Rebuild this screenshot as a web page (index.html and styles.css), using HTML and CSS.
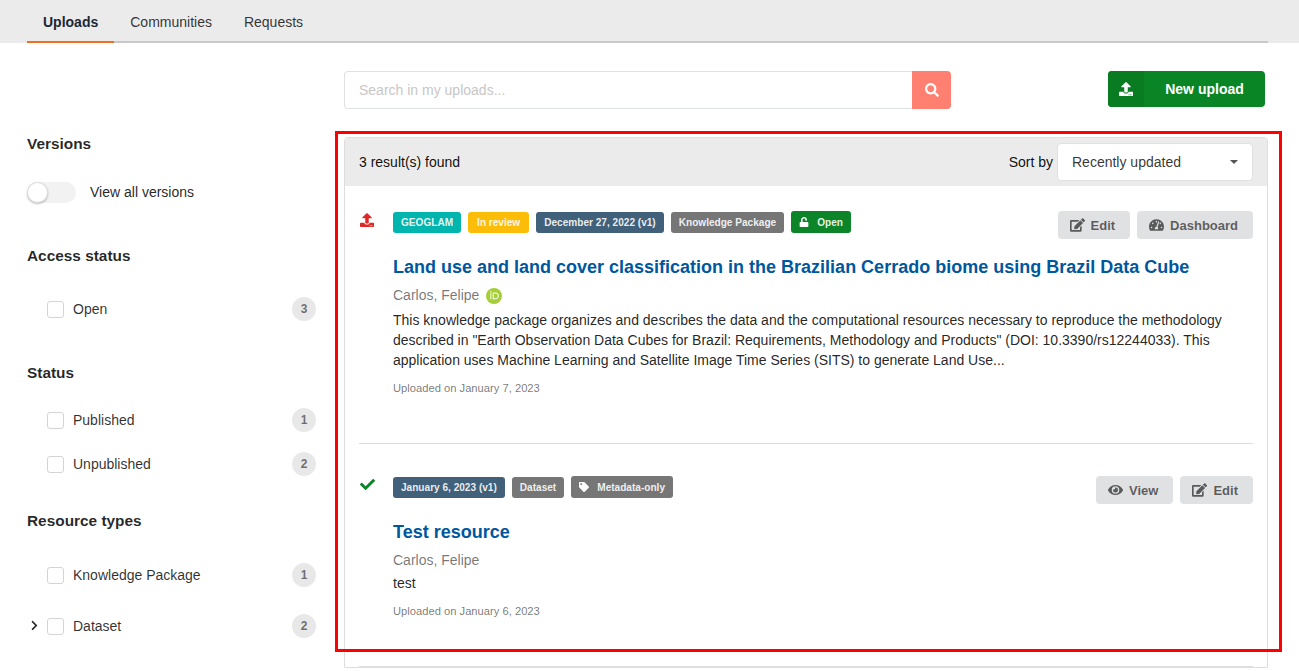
FILE: index.html
```html
<!DOCTYPE html>
<html lang="en">
<head>
    <meta charset="UTF-8">
    <meta name="viewport" content="width=device-width, initial-scale=1.0">
    <title>Uploads</title>
    <link rel="stylesheet" href="styles.css">
</head>
<body>
    <svg class="sprite" aria-hidden="true">
        <symbol id="i-upload" viewBox="0 0 512 512"><path d="M296 384h-80c-13.3 0-24-10.7-24-24V192h-87.7c-17.8 0-26.7-21.5-14.1-34.1L242.3 5.7c7.5-7.5 19.8-7.5 27.3 0l152.2 152.2c12.6 12.6 3.7 34.1-14.1 34.1H320v168c0 13.3-10.7 24-24 24zm216-8v112c0 13.3-10.7 24-24 24H24c-13.3 0-24-10.7-24-24V376c0-13.3 10.7-24 24-24h136v8c0 30.9 25.1 56 56 56h80c30.9 0 56-25.1 56-56v-8h136c13.3 0 24 10.7 24 24zm-124 88c0-11-9-20-20-20s-20 9-20 20 9 20 20 20 20-9 20-20zm64 0c0-11-9-20-20-20s-20 9-20 20 9 20 20 20 20-9 20-20z"/></symbol>
        <symbol id="i-search" viewBox="0 0 512 512"><path d="M505 442.7L405.3 343c-4.5-4.5-10.6-7-17-7H372c27.6-35.3 44-79.7 44-128C416 93.1 322.9 0 208 0S0 93.1 0 208s93.1 208 208 208c48.3 0 92.7-16.4 128-44v16.3c0 6.4 2.5 12.5 7 17l99.7 99.7c9.4 9.4 24.6 9.4 33.9 0l28.3-28.3c9.4-9.4 9.4-24.6.1-34zM208 336c-70.7 0-128-57.2-128-128 0-70.7 57.2-128 128-128 70.7 0 128 57.2 128 128 0 70.7-57.2 128-128 128z"/></symbol>
        <symbol id="i-check" viewBox="0 0 512 512"><path d="M173.898 439.404l-166.4-166.4c-9.997-9.997-9.997-26.206 0-36.204l36.203-36.204c9.997-9.998 26.207-9.998 36.204 0L192 312.69 432.095 72.596c9.997-9.997 26.207-9.997 36.204 0l36.203 36.204c9.997 9.997 9.997 26.206 0 36.204l-294.4 294.401c-9.998 9.997-26.207 9.997-36.204-.001z"/></symbol>
        <symbol id="i-edit" viewBox="0 0 576 512"><path d="M402.6 83.2l90.2 90.2c3.8 3.8 3.8 10 0 13.8L274.4 405.6l-92.8 10.3c-12.4 1.4-22.9-9.1-21.5-21.5l10.3-92.8L388.8 83.2c3.8-3.8 10-3.8 13.8 0zm162-22.9l-48.8-48.8c-15.2-15.2-39.9-15.2-55.2 0l-35.4 35.4c-3.8 3.8-3.8 10 0 13.8l90.2 90.2c3.8 3.8 10 3.8 13.8 0l35.4-35.4c15.2-15.3 15.2-40 0-55.2zM384 346.2V448H64V128h229.8c3.2 0 6.2-1.3 8.5-3.5l40-40c7.6-7.6 2.2-20.5-8.5-20.5H48C21.5 64 0 85.5 0 112v352c0 26.5 21.5 48 48 48h352c26.5 0 48-21.5 48-48V306.2c0-10.7-12.9-16-20.5-8.5l-40 40c-2.2 2.3-3.5 5.3-3.5 8.5z"/></symbol>
        <symbol id="i-eye" viewBox="0 0 576 512"><path d="M572.52 241.4C518.29 135.59 410.93 64 288 64S57.68 135.64 3.48 241.41a32.35 32.35 0 0 0 0 29.19C57.71 376.41 165.07 448 288 448s230.32-71.64 284.52-177.41a32.35 32.35 0 0 0 0-29.19zM288 400a144 144 0 1 1 144-144 143.93 143.93 0 0 1-144 144zm0-240a95.31 95.31 0 0 0-25.31 3.79 47.85 47.85 0 0 1-66.9 66.9A95.78 95.78 0 1 0 288 160z"/></symbol>
        <symbol id="i-tag" viewBox="0 0 512 512"><path d="M0 252.118V48C0 21.49 21.49 0 48 0h204.118a48 48 0 0 1 33.941 14.059l211.882 211.882c18.745 18.745 18.745 49.137 0 67.882L293.823 497.941c-18.745 18.745-49.137 18.745-67.882 0L14.059 286.059A48 48 0 0 1 0 252.118zM112 64c-26.51 0-48 21.49-48 48s21.49 48 48 48 48-21.49 48-48-21.49-48-48-48z"/></symbol>
        <symbol id="i-unlock" viewBox="0 0 448 512"><path d="M400 256H152V152.9c0-39.6 31.7-72.5 71.3-72.9 40-.4 72.7 32.1 72.7 72v16c0 13.3 10.7 24 24 24h32c13.3 0 24-10.7 24-24v-16C376 68 307.5-.3 223.5 0 139.5.3 72 69.5 72 153.5V256H48c-26.5 0-48 21.5-48 48v160c0 26.5 21.5 48 48 48h352c26.5 0 48-21.5 48-48V304c0-26.5-21.5-48-48-48z"/></symbol>
        <symbol id="i-dashboard" viewBox="0 0 576 512"><path d="M288 32C128.94 32 0 160.94 0 320c0 52.8 14.25 102.26 39.06 144.8 5.61 9.62 16.3 15.2 27.44 15.2h443c11.14 0 21.83-5.58 27.44-15.2C561.75 422.26 576 372.8 576 320c0-159.06-128.94-288-288-288zm0 64c14.71 0 26.58 10.13 30.32 23.65-1.11 2.26-2.64 4.23-3.45 6.67l-9.22 27.67c-5.13 3.49-10.97 6.01-17.64 6.01-17.67 0-32-14.33-32-32S270.33 96 288 96zM96 384c-17.67 0-32-14.33-32-32s14.33-32 32-32 32 14.33 32 32-14.33 32-32 32zm48-160c-17.67 0-32-14.33-32-32s14.33-32 32-32 32 14.33 32 32-14.33 32-32 32zm246.77-72.41l-61.33 184C343.13 347.33 352 364.54 352 384c0 11.72-3.38 22.55-8.88 32H232.88c-5.5-9.45-8.88-20.28-8.88-32 0-33.94 26.5-61.43 59.9-63.59l61.34-184.01c4.17-12.56 17.73-19.45 30.36-15.17 12.57 4.19 19.35 17.79 15.17 30.36zm14.66 57.2l15.52-46.55c3.47-1.29 7.13-2.23 11.05-2.23 17.67 0 32 14.33 32 32s-14.33 32-32 32c-11.38-.01-20.89-6.28-26.57-15.22zM480 384c-17.67 0-32-14.33-32-32s14.33-32 32-32 32 14.33 32 32-14.33 32-32 32z"/></symbol>
        <symbol id="i-chevron" viewBox="0 0 320 512"><path d="M285.476 272.971L91.132 467.314c-9.373 9.373-24.569 9.373-33.941 0l-22.667-22.667c-9.357-9.357-9.375-24.522-.04-33.901L188.505 256 34.484 101.255c-9.335-9.379-9.317-24.544.04-33.901l22.667-22.667c9.373-9.373 24.569-9.373 33.941 0L285.475 239.03c9.373 9.372 9.373 24.568.001 33.941z"/></symbol>
    </svg>

    <nav class="tabbar">
        <div class="tabs">
            <a class="tab active">Uploads</a>
            <a class="tab">Communities</a>
            <a class="tab">Requests</a>
        </div>
    </nav>

    <div class="page">
        <div class="toolbar">
            <div class="search">
                <input class="search-input" type="text" placeholder="Search in my uploads...">
                <button class="search-btn"><svg class="icon"><use href="#i-search"/></svg></button>
            </div>
            <button class="new-upload">
                <span class="new-upload-icon"><svg class="icon"><use href="#i-upload"/></svg></span>
                <span class="new-upload-label">New upload</span>
            </button>
        </div>

        <div class="columns">
            <aside class="sidebar">
                <h2 class="facet-title versions-title">Versions</h2>
                <label class="toggle-row">
                    <span class="toggle"><span class="knob"></span></span>
                    View all versions
                </label>

                <h2 class="facet-title access-title">Access status</h2>
                <div class="facet-row access-open"><span class="box"></span><span class="facet-label">Open</span><span class="count">3</span></div>

                <h2 class="facet-title status-title">Status</h2>
                <div class="facet-row status-first"><span class="box"></span><span class="facet-label">Published</span><span class="count">1</span></div>
                <div class="facet-row status-second"><span class="box"></span><span class="facet-label">Unpublished</span><span class="count">2</span></div>

                <h2 class="facet-title types-title">Resource types</h2>
                <div class="facet-row types-first"><span class="box"></span><span class="facet-label">Knowledge Package</span><span class="count">1</span></div>
                <div class="facet-row types-second">
                    <svg class="chevron"><use href="#i-chevron"/></svg>
                    <span class="box"></span><span class="facet-label">Dataset</span><span class="count">2</span>
                </div>
            </aside>

            <main class="results">
                <div class="results-head">
                    <span>3 result(s) found</span>
                    <div class="sort">
                        <span>Sort by</span>
                        <div class="sort-select">Recently updated<span class="caret"></span></div>
                    </div>
                </div>

                <article class="item item-first">
                    <div class="item-state"><svg class="icon state-upload"><use href="#i-upload"/></svg></div>
                    <div class="item-body">
                        <div class="item-top">
                            <div class="labels">
                                <span class="label teal">GEOGLAM</span>
                                <span class="label yellow">In review</span>
                                <span class="label slate">December 27, 2022 (v1)</span>
                                <span class="label grey">Knowledge Package</span>
                                <span class="label green tall"><svg class="icon"><use href="#i-unlock"/></svg>Open</span>
                            </div>
                            <div class="actions">
                                <button class="action"><svg class="icon"><use href="#i-edit"/></svg>Edit</button>
                                <button class="action"><svg class="icon"><use href="#i-dashboard"/></svg>Dashboard</button>
                            </div>
                        </div>
                        <h3 class="item-title">Land use and land cover classification in the Brazilian Cerrado biome using Brazil Data Cube</h3>
                        <div class="creators">Carlos, Felipe
                            <svg class="orcid" viewBox="0 0 256 256">
                                <circle cx="128" cy="128" r="128" fill="#a6ce39"/>
                                <path fill="#fff" d="M86 179H71V72h15zM108 72h41c39 0 56 28 56 54 0 28-22 53-56 53h-41zm15 14v79h24c34 0 42-26 42-39 0-21-13-40-43-40z"/>
                                <circle cx="78" cy="52" r="10" fill="#fff"/>
                            </svg>
                        </div>
                        <p class="desc">This knowledge package organizes and describes the data and the computational resources necessary to reproduce the methodology described in "Earth Observation Data Cubes for Brazil: Requirements, Methodology and Products" (DOI: 10.3390/rs12244033). This application uses Machine Learning and Satellite Image Time Series (SITS) to generate Land Use...</p>
                        <small class="uploaded">Uploaded on January 7, 2023</small>
                    </div>
                </article>

                <article class="item item-second">
                    <div class="item-state"><svg class="icon state-check"><use href="#i-check"/></svg></div>
                    <div class="item-body">
                        <div class="item-top">
                            <div class="labels">
                                <span class="label slate">January 6, 2023 (v1)</span>
                                <span class="label grey">Dataset</span>
                                <span class="label grey tall"><svg class="icon"><use href="#i-tag"/></svg>Metadata-only</span>
                            </div>
                            <div class="actions">
                                <button class="action"><svg class="icon"><use href="#i-eye"/></svg>View</button>
                                <button class="action"><svg class="icon"><use href="#i-edit"/></svg>Edit</button>
                            </div>
                        </div>
                        <h3 class="item-title">Test resource</h3>
                        <div class="creators">Carlos, Felipe</div>
                        <p class="desc">test</p>
                        <small class="uploaded">Uploaded on January 6, 2023</small>
                    </div>
                </article>
            </main>
        </div>
    </div>

    <!-- annotation box drawn over the results list -->
    <div class="highlight"></div>
</body>
</html>
```

FILE: styles.css
```css
html, body {
    height: 671px;
    overflow: hidden;
}

body {
    font-family: "Liberation Sans", Arial, sans-serif;
    font-size: 14px;
    line-height: 20px;
    color: rgba(0, 0, 0, 0.87);
    background: #fff;
    margin: 0;
    position: relative;
}

.sprite {
    display: none;
}

.icon {
    width: 14px;
    height: 14px;
    fill: currentColor;
    flex: none;
}

/* tabs */
.tabbar {
    background: #ebebeb;
    height: 43px;
    padding: 0 31px 0 27px;
}

.tabs {
    display: flex;
    height: 43px;
    box-sizing: border-box;
    border-bottom: 2px solid #c8c8c8;
}

.tab {
    height: 43px;
    box-sizing: border-box;
    padding: 12px 16px 0;
    color: rgba(0, 0, 0, 0.8);
}

.tab.active {
    font-weight: bold;
    color: #1c2733;
    border-bottom: 2px solid #f26d21;
}

.page {
    padding: 0 31px 0 27px;
}

/* search and upload */
.toolbar {
    display: flex;
    justify-content: space-between;
    align-items: flex-start;
    padding: 28px 3px 0 317px;
}

.search {
    display: flex;
    width: 607px;
    height: 38px;
}

.search-input {
    flex: 1;
    min-width: 0;
    box-sizing: border-box;
    border: 1px solid #e0e1e2;
    border-right: none;
    border-radius: 4px 0 0 4px;
    padding: 0 14px;
    font: 14px "Liberation Sans", Arial, sans-serif;
    outline: none;
}

.search-input::placeholder {
    color: #c7c7c7;
}

.search-btn {
    width: 39px;
    border: none;
    padding: 0;
    background: #ff8070;
    color: #fff;
    border-radius: 0 4px 4px 0;
    display: flex;
    align-items: center;
    justify-content: center;
}

.new-upload {
    display: flex;
    width: 157px;
    height: 36px;
    padding: 0;
    border: none;
    border-radius: 4px;
    overflow: hidden;
    background: #0a8526;
    color: #fff;
    font: bold 14px "Liberation Sans", Arial, sans-serif;
}

.new-upload-icon {
    width: 36px;
    height: 36px;
    background: #097c22;
    display: flex;
    align-items: center;
    justify-content: center;
}

.new-upload-label {
    flex: 1;
    line-height: 36px;
    text-align: center;
}

/* layout */
.columns {
    display: flex;
    align-items: flex-start;
}

.sidebar {
    width: 289px;
    margin-right: 28px;
    flex: none;
}

.facet-title {
    font-size: 15.4px;
    line-height: 18px;
    font-weight: bold;
    color: rgba(0, 0, 0, 0.85);
    margin: 0;
}

.versions-title { margin-top: 26px; }
.access-title { margin-top: 44px; }
.status-title { margin-top: 43px; }
.types-title { margin-top: 36px; }

.toggle-row {
    display: flex;
    align-items: center;
    gap: 14px;
    margin-top: 28px;
    height: 22px;
}

.toggle {
    width: 49px;
    height: 21px;
    background: #f2f2f2;
    border-radius: 11px;
    position: relative;
}

.knob {
    position: absolute;
    left: 0;
    top: 0;
    width: 21px;
    height: 21px;
    box-sizing: border-box;
    border-radius: 50%;
    background: #fff;
    box-shadow: 0 1px 2px rgba(34, 36, 38, 0.3), 0 0 0 1px rgba(34, 36, 38, 0.15) inset;
}

.facet-row {
    display: flex;
    align-items: center;
    height: 24px;
    padding-left: 20px;
    position: relative;
}

.access-open { margin-top: 32px; }
.status-first { margin-top: 26px; }
.status-second { margin-top: 20px; }
.types-first { margin-top: 33px; }
.types-second { margin-top: 27px; }

.box {
    width: 17px;
    height: 17px;
    box-sizing: border-box;
    border: 1px solid #d4d4d5;
    border-radius: 3px;
    margin-right: 9px;
}

.facet-label {
    flex: 1;
    color: rgba(0, 0, 0, 0.82);
}

.count {
    width: 24px;
    height: 24px;
    border-radius: 50%;
    background: #e8e8e8;
    color: rgba(0, 0, 0, 0.55);
    font-size: 12px;
    font-weight: bold;
    line-height: 24px;
    text-align: center;
}

/* chevron sits in the indent, left of the checkbox */
.chevron {
    position: absolute;
    left: 4px;
    top: 6px;
    width: 7px;
    height: 11px;
    fill: #2b2b2b;
}

/* results */
.results {
    width: 924px;
    box-sizing: border-box;
    margin-top: 28px;
    border: 1px solid #dededf;
    border-radius: 4px 4px 0 0;
    flex: none;
}

.results-head {
    height: 48px;
    background: #ebebeb;
    display: flex;
    align-items: center;
    justify-content: space-between;
    padding: 0 14px;
    color: rgba(0, 0, 0, 0.95);
}

.sort {
    display: flex;
    align-items: center;
    gap: 4px;
}

.sort-select {
    width: 196px;
    height: 38px;
    box-sizing: border-box;
    background: #fff;
    border-radius: 4px;
    border: 1px solid #e0e1e2;
    padding: 0 14px;
    line-height: 36px;
    color: rgba(0, 0, 0, 0.8);
    position: relative;
}

.caret {
    position: absolute;
    right: 14px;
    top: 16px;
    border-left: 4px solid transparent;
    border-right: 4px solid transparent;
    border-top: 4px solid #555;
}

.item {
    display: flex;
    margin: 0 14px;
    border-bottom: 1px solid #dededf;
}

.item-first {
    height: 258px;
    padding-top: 25px;
    box-sizing: border-box;
}

.item-second {
    height: 223px;
    padding-top: 32px;
    box-sizing: border-box;
}

.item-state {
    width: 33px;
    margin-left: 1px;
    flex: none;
}

.state-upload {
    width: 14px;
    height: 14px;
    margin-top: 2px;
    color: #db2828;
    display: block;
}

.state-check {
    width: 15px;
    height: 15px;
    margin-top: 1px;
    color: #0b8527;
    display: block;
}

.item-body {
    flex: 1;
    min-width: 0;
}

.item-top {
    display: flex;
    justify-content: space-between;
    align-items: flex-start;
}

.labels {
    display: flex;
    align-items: flex-start;
    gap: 7px;
    padding-top: 1px;
}

.label {
    height: 21px;
    box-sizing: border-box;
    padding: 0 8px;
    border-radius: 3px;
    font-size: 10.08px;
    font-weight: bold;
    line-height: 21px;
    color: rgba(255, 255, 255, 0.9);
    display: flex;
    align-items: center;
    white-space: nowrap;
}

.label.tall {
    height: 22px;
    margin-top: -1px;
}

.label .icon {
    width: 10px;
    height: 10px;
    margin-right: 8px;
    color: #fff;
}

.teal { background: #00b5ad; }
.yellow { background: #fbbd08; padding: 0 9px; }
.slate { background: #41607a; }
.grey { background: #767676; }
.green { background: #0b8527; }

.actions {
    display: flex;
    gap: 7px;
}

.action {
    height: 28px;
    padding: 0 15px 0 12px;
    border: none;
    border-radius: 4px;
    background: #e0e1e2;
    color: rgba(0, 0, 0, 0.6);
    font: bold 13px "Liberation Sans", Arial, sans-serif;
    display: flex;
    align-items: center;
    gap: 6px;
}

.action .icon {
    width: 15px;
    height: 14px;
}

.item-title {
    font-size: 18px;
    line-height: 24px;
    font-weight: bold;
    color: #00579e;
    margin: 16px 0 0;
}

.creators {
    display: flex;
    align-items: flex-start;
    gap: 7px;
    margin-top: 6px;
    color: rgba(0, 0, 0, 0.55);
}

.orcid {
    width: 16px;
    height: 16px;
    margin: 3px 0;
}

.desc {
    margin: 3px 0 0;
    color: rgba(0, 0, 0, 0.87);
}

.uploaded {
    display: block;
    margin-top: 9px;
    font-size: 11.2px;
    line-height: 18px;
    color: rgba(0, 0, 0, 0.55);
}

.highlight {
    position: absolute;
    left: 335px;
    top: 131px;
    width: 941px;
    height: 515px;
    border: 3px solid #ff0000;
    pointer-events: none;
}
```
